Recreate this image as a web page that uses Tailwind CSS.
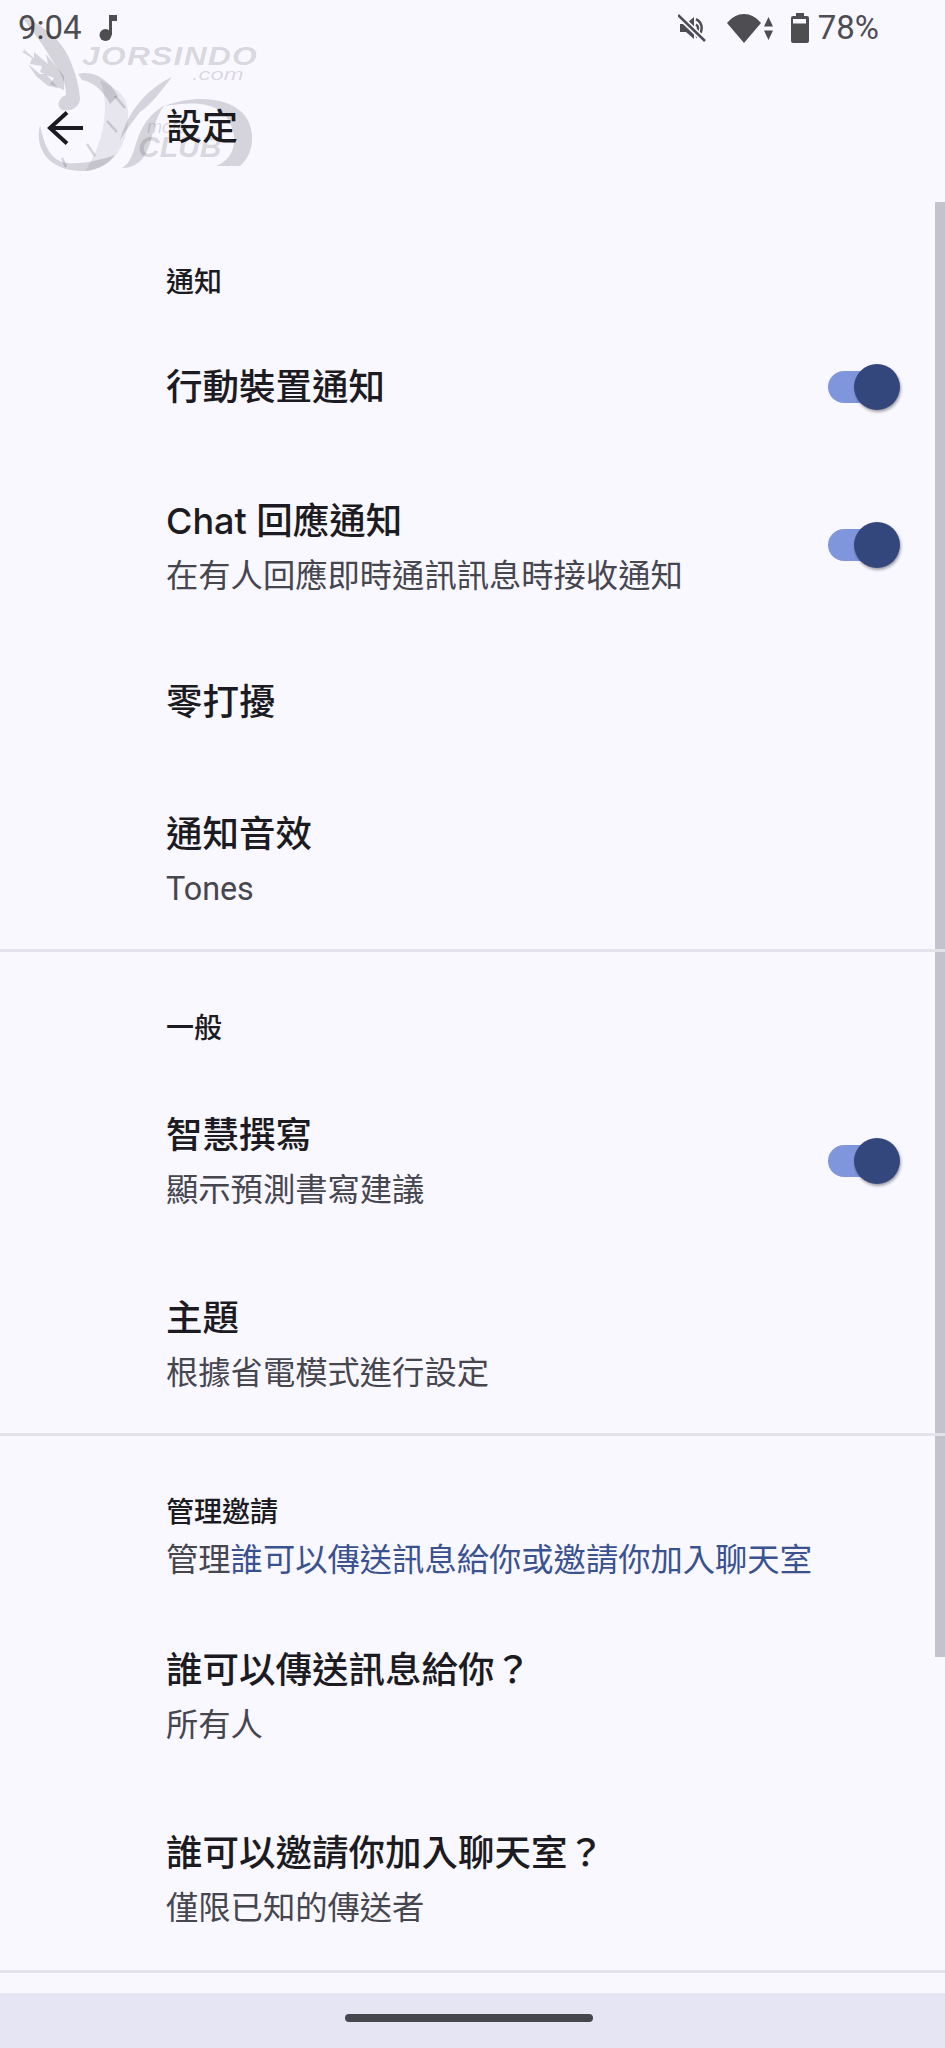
<!DOCTYPE html>
<html lang="zh-Hant">
<head>
  <meta charset="UTF-8" />
  <meta name="viewport" content="width=device-width, initial-scale=1.0" />
  <title>設定</title>
  <script src="https://cdn.jsdelivr.net/npm/@tailwindcss/browser@4"></script>
</head>
<body class="bg-[#f9f7ff] font-['Roboto','Noto_Sans_CJK_TC',sans-serif]">
  <div class="relative w-[945px] h-[2048px] overflow-hidden flex flex-col text-[#1b1b21]">

    <!-- status bar -->
    <div class="h-[56px] flex items-center pl-[18px] text-[#4d4d52] text-[33px] shrink-0">
      <span>9:04</span>
      <svg class="ml-[17px] w-[18px] h-[26px]" viewBox="0 0 18 26" fill="#4d4d52"><circle cx="6.500" cy="20" r="6"/><path d="M10 0h8v6h-5v14h-3z"/></svg>
      <div class="ml-auto mr-[66px] flex items-center">
        <svg class="w-[28px] h-[28px]" viewBox="0 0 28 28" fill="none" stroke="#4d4d52" stroke-width="2.500">
          <path fill="#4d4d52" stroke="none" d="M2 10h6l8-7v22l-8-7H2z"/>
          <path d="M18 5a10 10 0 0 1 0 18M18 10.500a4 4 0 0 1 0 7"/>
          <path d="M0 1l27 26" stroke="#f9f7ff" stroke-width="6"/>
          <path d="M0 1l27 26"/>
        </svg>
        <svg class="ml-[21px] w-[34px] h-[29px]" viewBox="0 0 34 29" fill="#4d4d52"><path d="M0 9C10-3 24-3 34 9L17 29z"/></svg>
        <svg class="ml-[3px] w-[9px] h-[23px]" viewBox="0 0 9 23" fill="#4d4d52"><path d="M4.500 0L9 9.500H0zM4.500 23L0 13.500h9z"/></svg>
        <svg class="ml-[18px] w-[18px] h-[30px]" viewBox="0 0 18 30"><path fill="#4d4d52" d="M5 0h8v3h3a2 2 0 0 1 2 2v23a2 2 0 0 1-2 2H2a2 2 0 0 1-2-2V5a2 2 0 0 1 2-2h3z"/><rect x="2" y="6" width="13" height="4.500" fill="#f9f7ff"/></svg>
        <span class="ml-[9px]">78%</span>
      </div>
    </div>

    <!-- toolbar -->
    <div class="h-[146px] pb-[2px] flex items-center shrink-0">
      <svg class="ml-[45px] w-[40px] h-[38px]" viewBox="0 0 40 38" fill="none" stroke="#1b1b21" stroke-width="4"><path d="M38 19H4M22 3.500L5 19l17 15.500"/></svg>
      <h1 class="ml-[81px] text-[36px] leading-none font-medium">設定</h1>
    </div>

    <!-- 通知 -->
    <section class="relative z-10 pl-[166px] h-[750px] shrink-0 border-b-[3px] border-[#e3e3e9] flex flex-col">
      <div class="h-[111px] pt-[61px] text-[28px] leading-[40px] font-medium">通知</div>
      <div class="h-[147px] pr-[45px] flex items-center justify-between">
        <div class="mt-[4px] text-[36.5px] font-medium">行動裝置通知</div>
        <div class="relative w-[72px] h-[46px] flex items-center">
          <div class="w-[62px] h-[32px] rounded-full bg-[#7f96dd]"></div>
          <div class="absolute right-0 top-0 w-[46px] h-[46px] rounded-full bg-[#34477c] shadow-[1px_2px_3px_rgba(0,0,0,0.35)]"></div>
        </div>
      </div>
      <div class="h-[172px] pr-[45px] flex items-center justify-between">
        <div>
          <div class="text-[36.5px] leading-[50px] font-medium"><span class="font-['Inter'] text-[36px]">Chat </span>回應通知</div>
          <div class="text-[32.3px] leading-[40px] mt-[9px] text-[#46464f]">在有人回應即時通訊訊息時接收通知</div>
        </div>
        <div class="relative w-[72px] h-[46px] mb-[3px] flex items-center">
          <div class="w-[62px] h-[32px] rounded-full bg-[#7f96dd]"></div>
          <div class="absolute right-0 top-0 w-[46px] h-[46px] rounded-full bg-[#34477c] shadow-[1px_2px_3px_rgba(0,0,0,0.35)]"></div>
        </div>
      </div>
      <div class="h-[138px] flex items-center">
        <div class="mt-[4px] text-[36.5px] font-medium">零打擾</div>
      </div>
      <div class="h-[179px] flex items-center">
        <div>
          <div class="text-[36.5px] leading-[50px] font-medium">通知音效</div>
          <div class="text-[32.3px] leading-[40px] mt-[9px] text-[#46464f]">Tones</div>
        </div>
      </div>
    </section>

    <!-- 一般 -->
    <section class="relative z-10 pl-[166px] h-[484px] shrink-0 border-b-[3px] border-[#e3e3e9] flex flex-col">
      <div class="h-[117px] pt-[57px] text-[28px] leading-[40px] font-medium">一般</div>
      <div class="h-[183px] pr-[45px] flex items-center justify-between">
        <div>
          <div class="text-[36.5px] leading-[50px] font-medium">智慧撰寫</div>
          <div class="text-[32.3px] leading-[40px] mt-[9px] text-[#46464f]">顯示預測書寫建議</div>
        </div>
        <div class="relative w-[72px] h-[46px] flex items-center">
          <div class="w-[62px] h-[32px] rounded-full bg-[#7f96dd]"></div>
          <div class="absolute right-0 top-0 w-[46px] h-[46px] rounded-full bg-[#34477c] shadow-[1px_2px_3px_rgba(0,0,0,0.35)]"></div>
        </div>
      </div>
      <div class="h-[181px] pt-[1px] flex items-center">
        <div>
          <div class="text-[36.5px] leading-[50px] font-medium">主題</div>
          <div class="text-[32.3px] leading-[40px] mt-[9px] text-[#46464f]">根據省電模式進行設定</div>
        </div>
      </div>
    </section>

    <!-- 管理邀請 -->
    <section class="relative z-10 pl-[166px] h-[537px] shrink-0 border-b-[3px] border-[#e3e3e9] flex flex-col">
      <div class="pt-[57px] text-[28px] leading-[40px] font-medium">管理邀請</div>
      <div class="mt-[3px] text-[32.3px] leading-[48px] text-[#46464f]">管理<span class="text-[#3a5290]">誰可以傳送訊息給你或邀請你加入聊天室</span></div>
      <div class="mt-[20px] h-[183px] flex items-center">
        <div>
          <div class="text-[36.5px] leading-[50px] font-medium">誰可以傳送訊息給你？</div>
          <div class="text-[32.3px] leading-[40px] mt-[9px] text-[#46464f]">所有人</div>
        </div>
      </div>
      <div class="h-[183px] flex items-center">
        <div>
          <div class="text-[36.5px] leading-[50px] font-medium">誰可以邀請你加入聊天室？</div>
          <div class="text-[32.3px] leading-[40px] mt-[9px] text-[#46464f]">僅限已知的傳送者</div>
        </div>
      </div>
    </section>

    <!-- nav bar -->
    <div class="mt-auto h-[55px] pr-[7px] pb-[5px] bg-[#e5e5f3] flex items-center justify-center">
      <div class="w-[248px] h-[8px] rounded-full bg-[#46464f]"></div>
    </div>

    <!-- scrollbar thumb -->
    <div class="absolute right-0 top-[202px] w-[10px] h-[1455px] bg-[#c3c2cd]"></div>

    <!-- watermark, sits over the page like the burnt-in one -->
    <div class="absolute z-20 left-0 top-0 w-[270px] h-[180px] pointer-events-none text-black/[0.14] font-['Liberation_Sans',sans-serif] italic">
      <svg class="absolute inset-0" width="270" height="180" viewBox="0 0 270 180" fill="#000" fill-opacity="0.14">
        <!-- tail + ball -->
        <path d="M20 15C42 24 62 40 70 60C76 74 79 86 80 98C80 108 70 112 62 110C56 106 58 98 66 95C66 84 62 74 52 60C44 46 32 30 20 15z"/>
        <!-- jagged wing -->
        <path d="M22 48l12 10 0-6 14 12-2-10 18 22 0 14-14-6 4-6-14-6 2-6-12-2 2-6-10-6 4-2z"/>
        <path d="M28 64l12 10 6 0 12 14-10-2-12-10-8-12z"/>
        <!-- wheel: dark band on top and round the bottom, lighter rim on the right -->
        <path fill-opacity="0.07" d="M100 80C118 88 128 98 128 112C130 140 115 170 85 171C100 150 112 110 100 80z"/>
        <path d="M40 125C34 150 50 172 85 171C98 170 108 164 115 155C100 160 78 166 62 162C50 158 44 145 40 125z"/>
        <path d="M78 74C92 70 108 78 118 96L110 104C104 92 94 82 82 80z"/>
        <!-- centre leaf -->
        <path d="M120 140C128 112 145 90 172 77C160 92 152 104 140 112C134 120 126 130 120 140z"/>
        <!-- road and big swoosh -->
        <path d="M122 168C140 158 130 125 165 105C150 122 155 150 138 163C132 167 128 168 122 168z"/>
        <path d="M216 166C238 158 240 130 222 112C208 102 190 102 165 106C200 92 250 98 252 135C253 150 247 160 240 166z"/>
      </svg>
      <svg class="absolute inset-0" width="270" height="180" viewBox="0 0 270 180" fill="none" stroke="#000" stroke-opacity="0.14" stroke-width="2.500">
        <path d="M115 96l10 12M107 121l10 11M87 144l8 12M62 158l4 9"/>
      </svg>
      <div class="absolute left-[82px] top-[44px] text-[25px] leading-none font-bold tracking-[1px] origin-left scale-x-[1.27]">JORSINDO</div>
      <div class="absolute left-[192px] top-[66px] text-[17px] leading-none origin-left scale-x-[1.4]">.com</div>
      <div class="absolute left-[147px] top-[118px] text-[18px] leading-none">moto</div>
      <div class="absolute left-[138px] top-[132px] text-[30px] leading-none font-bold">CLUB</div>
    </div>
  </div>
</body>
</html>
